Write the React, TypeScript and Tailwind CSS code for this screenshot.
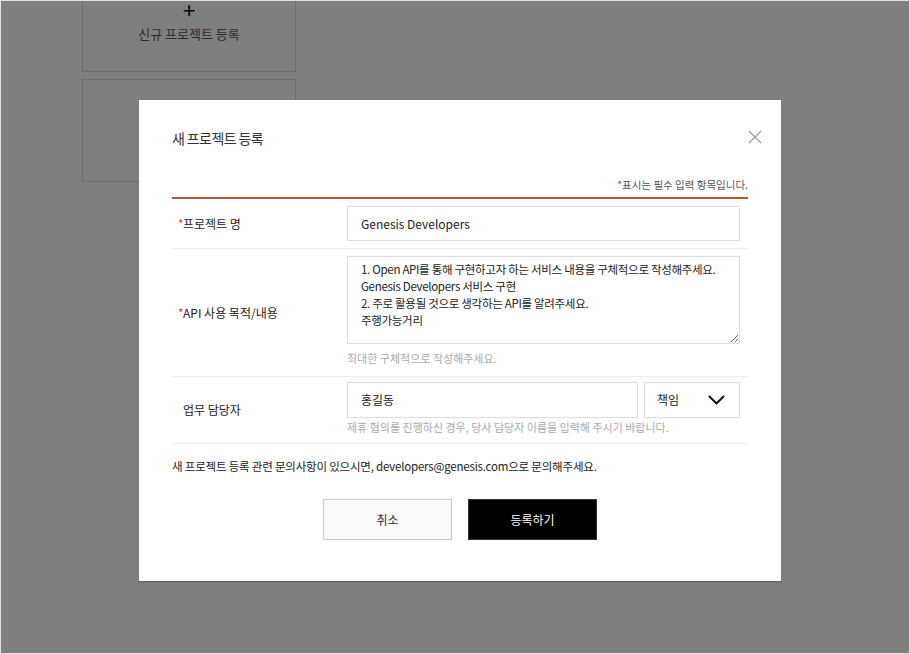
const font = "[font-family:'Noto_Sans_CJK_KR','Noto_Sans',sans-serif]";

function CloseIcon() {
  return (
    <svg width="14" height="14" viewBox="0 0 14 14" fill="none" stroke="#9a9a9a" strokeWidth="1.2">
      <path d="M1 1L13 13M13 1L1 13" />
    </svg>
  );
}

function Chevron() {
  return (
    <svg width="17" height="10" viewBox="0 0 17 10" fill="none" stroke="#111" strokeWidth="2" strokeLinecap="round" strokeLinejoin="round">
      <path d="M1.5 1.5L8.5 8.5L15.5 1.5" />
    </svg>
  );
}

function Row({
  label,
  required,
  children,
}: {
  label: string;
  required?: boolean;
  children: React.ReactNode;
}) {
  return (
    <div className="flex items-center border-b border-[#ececec]">
      <div className="flex w-[175px] shrink-0 items-center pl-[6px] text-[12px] text-[#222]">
        <span className={required ? "w-[5px] text-[#e53b2c]" : "w-[5px]"}>{required ? "*" : ""}</span>
        <span>{label}</span>
      </div>
      <div className="flex-1 pr-[8px]">{children}</div>
    </div>
  );
}

export default function App() {
  return (
    <div className={`relative h-[654px] w-[910px] overflow-hidden border border-[#e2e2e2] bg-white ${font}`}>
      {/* page behind the dialog */}
      <div className="ml-[81px] mt-[-32px] flex w-[214px] flex-col gap-[7px]">
        <div className="flex h-[103px] flex-col items-center justify-end border border-[#d8d8d8] bg-white pb-[28px]">
          <span className="text-[22px] leading-[22px] text-black">+</span>
          <span className="mt-[4px] text-[13px] text-[#555]">신규 프로젝트 등록</span>
        </div>
        <div className="h-[103px] border border-[#d8d8d8] bg-white" />
      </div>

      {/* overlay */}
      <div className="absolute inset-0 bg-black/50" />

      {/* dialog */}
      <div className="absolute left-[138px] top-[99px] h-[481px] w-[642px] bg-white px-[33px] shadow-[0_1px_1px_rgba(0,0,0,0.25)]">
        <div className="flex items-center justify-between pt-[28px]">
          <h2 className="text-[14px] leading-[20px] tracking-[-0.6px] text-[#333]">새 프로젝트 등록</h2>
          <button className="mr-[-14px] mt-[-2px]">
            <CloseIcon />
          </button>
        </div>

        <p className="mt-[29px] text-right text-[10.5px] leading-[16px] text-[#555]">
          <span className="text-[#e53b2c]">*</span>표시는 필수 입력 항목입니다.
        </p>
        <div className="mt-[4px] h-[2px] bg-[#b5562f]" />

        <Row label="프로젝트 명" required>
          <div className="my-[7px] flex h-[35px] items-center border border-[#dcdcdc] px-[13px] text-[12px] text-[#222]">
            Genesis Developers
          </div>
        </Row>

        <Row label="API 사용 목적/내용" required>
          <div className="pb-[10px] pt-[7px]">
            <textarea
              readOnly
              className="block h-[88px] w-full resize-y overflow-hidden border border-[#dcdcdc] px-[13px] py-[4px] text-[11.5px] leading-[17px] tracking-[-0.3px] text-[#222] outline-none"
              value={
                "1. Open API를 통해 구현하고자 하는 서비스 내용을 구체적으로 작성해주세요.\nGenesis Developers 서비스 구현\n2. 주로 활용될 것으로 생각하는 API를 알려주세요.\n주행가능거리"
              }
            />
            <p className="mt-[6px] text-[11px] leading-[16px] text-[#aaa]">최대한 구체적으로 작성해주세요.</p>
          </div>
        </Row>

        <Row label="업무 담당자">
          <div className="pb-[8px] pt-[5px]">
            <div className="flex gap-[6px]">
              <div className="flex h-[36px] flex-1 items-center border border-[#dcdcdc] px-[13px] text-[12px] text-[#222]">
                홍길동
              </div>
              <div className="flex h-[36px] w-[96px] items-center justify-between border border-[#dcdcdc] pl-[12px] pr-[14px] text-[12px] text-[#222]">
                <span>책임</span>
                <Chevron />
              </div>
            </div>
            <p className="mt-[1px] text-[11px] leading-[16px] text-[#aaa]">
              제휴 협의를 진행하신 경우, 당사 담당자 이름을 입력해 주시기 바랍니다.
            </p>
          </div>
        </Row>

        <p className="mt-[14px] text-[11.5px] leading-[16px] tracking-[-0.2px] text-[#222]">
          새 프로젝트 등록 관련 문의사항이 있으시면, developers@genesis.com으로 문의해주세요.
        </p>

        <div className="mt-[25px] flex justify-center gap-[16px]">
          <button className="h-[41px] w-[129px] border border-[#c8c8c8] bg-[#fafafa] text-[12px] text-[#333]">
            취소
          </button>
          <button className="h-[41px] w-[129px] border border-[#333] bg-black text-[12px] text-white">
            등록하기
          </button>
        </div>
      </div>
    </div>
  );
}
